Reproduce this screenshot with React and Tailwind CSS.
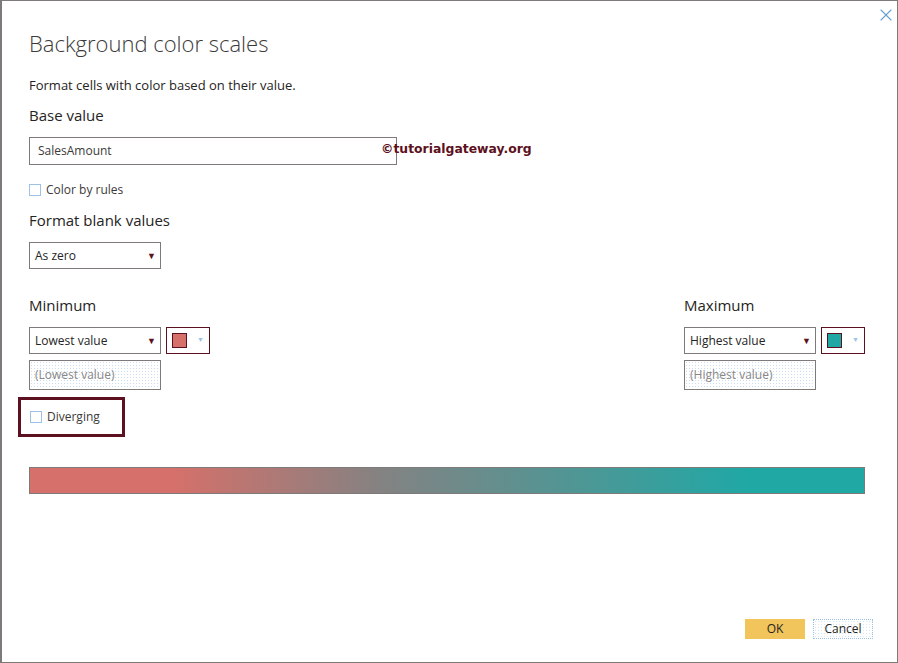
import { X } from 'lucide-react';

const font = { fontFamily: '"Segoe UI", "Open Sans", sans-serif' };

const Checkbox = ({ label }) => (
  <label className="flex items-center gap-[5px] text-[12px] text-[#3b3a39]">
    <span className="w-[12px] h-[12px] border border-[#9cc3e6] bg-white" />
    {label}
  </label>
);

const Select = ({ value, w = 'w-[132px]' }) => (
  <div className={`${w} h-[27px] border border-[#7f7a7a] flex items-center justify-between pl-[5px] pr-[4px] text-[12px] text-[#252423]`}>
    <span>{value}</span>
    <span className="text-[9px] text-[#5c1020]">▼</span>
  </div>
);

const ColorPicker = ({ color }) => (
  <div className="w-[44px] h-[27px] border border-[#5c1020] flex items-center pl-[5px] gap-[10px]">
    <span className="w-[15px] h-[15px] border border-[#5c1020]" style={{ background: color }} />
    <span className="text-[7px] text-[#9cc3e6]">▼</span>
  </div>
);

const Disabled = ({ text }) => (
  <div className="w-[132px] h-[30px] mt-[6px] border border-[#7f7a7a] flex items-center pl-[5px] text-[12px] text-[#8a8886] bg-[radial-gradient(#c9def2_0.7px,transparent_0.8px)] bg-[length:3px_3px]">
    {text}
  </div>
);

export default function App() {
  return (
    <div className="w-[898px] h-[663px] bg-white border border-[#7f7a7a] border-l-2 relative overflow-hidden" style={font}>
      <X className="absolute right-[1px] top-[4px] text-[#6a9fd0]" size={20} strokeWidth={1.3} />
      <div className="pl-[27px] pr-[32px] pt-[26px]">
        <h1 className="text-[22px] font-light text-[#3b3a39] leading-[32px]">Background color scales</h1>
        <p className="mt-[17px] text-[13px] text-[#252423] leading-[18px]">Format cells with color based on their value.</p>
        <h2 className="mt-[11px] text-[15px] text-[#252423] leading-[20px]">Base value</h2>
        <div className="relative mt-[12px]">
          <div className="w-[368px] h-[28px] border border-[#7f7a7a] flex items-center pl-[8px] text-[12px] text-[#3b3a39]">SalesAmount</div>
          <span className="absolute left-[352px] top-[3px] text-[12.4px] font-bold text-[#5c1020]" style={{ fontFamily: 'Verdana, "DejaVu Sans", sans-serif' }}>©tutorialgateway.org</span>
        </div>
        <div className="mt-[16px]">
          <Checkbox label="Color by rules" />
        </div>
        <h2 className="mt-[11px] text-[15px] text-[#252423] leading-[20px]">Format blank values</h2>
        <div className="mt-[12px]">
          <Select value="As zero" />
        </div>
        <div className="mt-[26px] flex justify-between">
          <div>
            <h2 className="text-[15px] text-[#252423] leading-[20px]">Minimum</h2>
            <div className="mt-[12px] flex gap-[5px]">
              <Select value="Lowest value" />
              <ColorPicker color="#d6706a" />
            </div>
            <Disabled text="(Lowest value)" />
            <div className="-ml-[11px] mt-[7px] w-[107px] h-[40px] border-[3px] border-[#5c1020] flex items-center pl-[9px]">
              <Checkbox label="Diverging" />
            </div>
          </div>
          <div>
            <h2 className="text-[15px] text-[#252423] leading-[20px]">Maximum</h2>
            <div className="mt-[12px] flex gap-[5px]">
              <Select value="Highest value" />
              <ColorPicker color="#20a8a5" />
            </div>
            <Disabled text="(Highest value)" />
          </div>
        </div>
        <div className="mt-[30px] h-[27px] border border-[#7f7a7a] bg-[linear-gradient(to_right,#d6706a_0%,#d6706a_17%,#848282_42%,#20a8a5_86%,#20a8a5_100%)]" />
      </div>
      <div className="absolute right-[24px] bottom-[23px] flex gap-[8px] text-[12px] text-[#252423]">
        <button className="w-[60px] h-[20px] bg-[#f2c45c]">OK</button>
        <button className="w-[60px] h-[20px] border border-dotted border-[#9cc3e6] bg-[radial-gradient(#d6e6f5_0.7px,transparent_0.8px)] bg-[length:3px_3px]">Cancel</button>
      </div>
    </div>
  );
}
